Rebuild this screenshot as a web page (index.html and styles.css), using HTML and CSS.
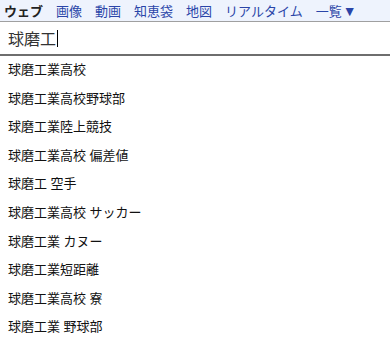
FILE: index.html
```html
<!DOCTYPE html>
<html lang="ja">
<head>
    <meta charset="UTF-8">
    <title>検索候補</title>
    <link rel="stylesheet" href="styles.css">
</head>
<body>
    <nav class="tabs">
        <span class="tab tab-active">ウェブ</span>
        <a class="tab" href="#">画像</a>
        <a class="tab" href="#">動画</a>
        <a class="tab" href="#">知恵袋</a>
        <a class="tab" href="#">地図</a>
        <a class="tab" href="#">リアルタイム</a>
        <a class="tab" href="#">一覧<span class="arrow">▼</span></a>
    </nav>

    <div class="search-box">
        <span class="query">球磨工</span><span class="caret"></span>
    </div>

    <ul class="suggest">
        <li>球磨工業高校</li>
        <li>球磨工業高校野球部</li>
        <li>球磨工業陸上競技</li>
        <li>球磨工業高校 偏差値</li>
        <li>球磨工 空手</li>
        <li>球磨工業高校 サッカー</li>
        <li>球磨工業 カヌー</li>
        <li>球磨工業短距離</li>
        <li>球磨工業高校 寮</li>
        <li>球磨工業 野球部</li>
    </ul>
</body>
</html>
```

FILE: styles.css
```css
* {
    margin: 0;
    padding: 0;
    box-sizing: border-box;
}

body {
    font-family: "Liberation Sans", "Noto Sans CJK JP", sans-serif;
    background: #fff;
    color: #222;
    width: 390px;
}

.tabs {
    display: flex;
    align-items: center;
    height: 22px;
    padding-left: 4px;
    background: #eef3fd;
    border-bottom: 1px solid #a0a0a0;
    font-size: 13px;
    gap: 13px;
}

.tab {
    color: #2a45a8;
    text-decoration: none;
    white-space: nowrap;
}

.tab-active {
    color: #222;
    font-weight: bold;
}

.arrow {
    font-size: 14px;
    margin-left: 1px;
}

.search-box {
    display: flex;
    align-items: center;
    height: 34px;
    padding-left: 8px;
    border-bottom: 2px solid #6e6e6e;
    font-size: 16px;
    color: #333;
}

.caret {
    display: inline-block;
    width: 1px;
    height: 17px;
    margin-left: 1px;
    background: #000;
}

.suggest {
    list-style: none;
    font-size: 13px;
    color: #111;
}

.suggest li {
    height: 28.6px;
    line-height: 28.6px;
    padding-left: 8px;
}
```
